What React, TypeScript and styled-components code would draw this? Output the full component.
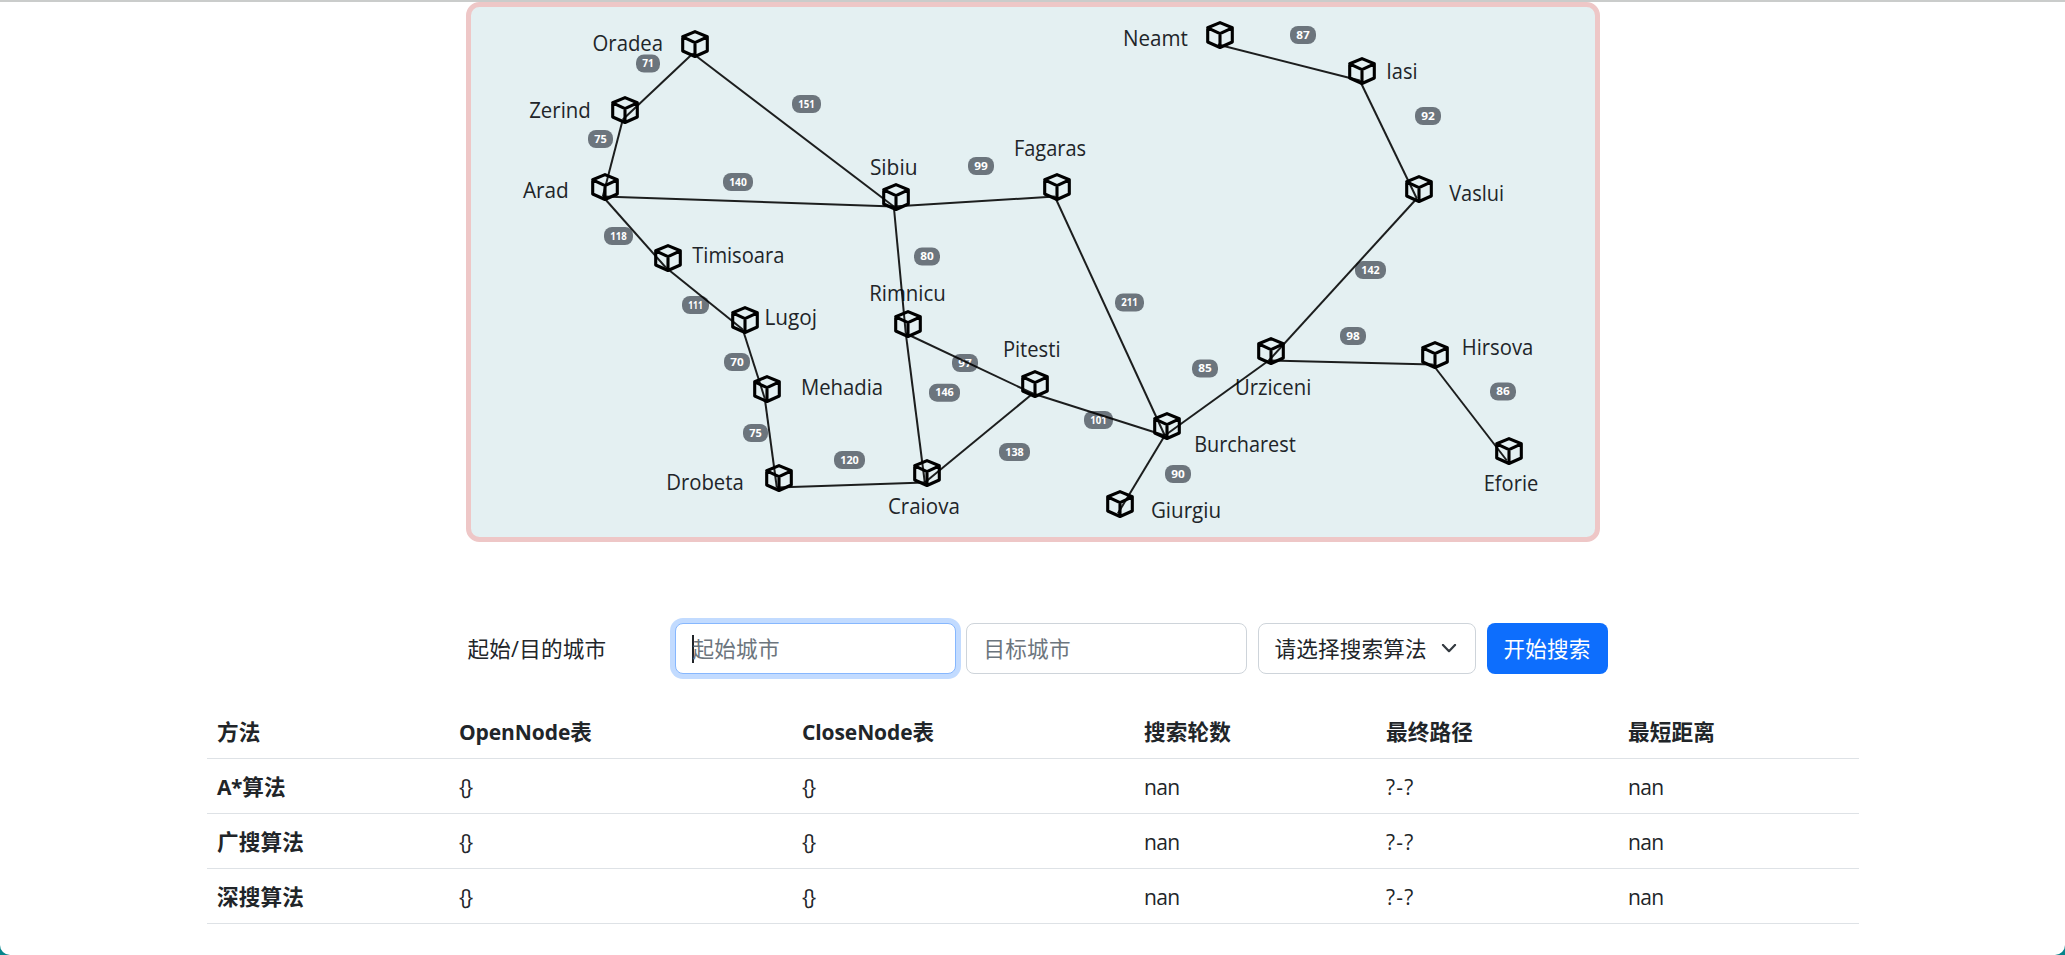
import React from "react";
import styled, { createGlobalStyle } from "styled-components";

const GlobalStyle = createGlobalStyle`
  *, *::before, *::after { box-sizing: border-box; }
  html, body { margin: 0; padding: 0; overflow: hidden; }
  body {
    background: #06858c;
    color: #212529;
    font-family: "Open Sans", "Noto Sans CJK SC", sans-serif;
    font-size: 21.6px;
    line-height: 32.4px;
  }
`;

type City = { x: number; y: number; name: string; from: number; to: number; base: number };

const cities: Record<string, City> = {
  oradea: { x: 695, y: 44, name: "Oradea", from: 593.3, to: 662.3, base: 51 },
  zerind: { x: 625, y: 110, name: "Zerind", from: 530, to: 590, base: 118 },
  arad: { x: 605, y: 187, name: "Arad", from: 523.7, to: 568, base: 198 },
  timisoara: { x: 668, y: 258, name: "Timisoara", from: 693, to: 783.7, base: 263 },
  lugoj: { x: 745, y: 320, name: "Lugoj", from: 765.3, to: 816.3, base: 325 },
  mehadia: { x: 767, y: 389, name: "Mehadia", from: 801.7, to: 882.3, base: 395 },
  drobeta: { x: 779, y: 478, name: "Drobeta", from: 667, to: 743, base: 490 },
  craiova: { x: 927, y: 473, name: "Craiova", from: 888.7, to: 959, base: 514 },
  rimnicu: { x: 908, y: 324, name: "Rimnicu", from: 870, to: 945, base: 301 },
  pitesti: { x: 1035, y: 384, name: "Pitesti", from: 1003.7, to: 1059.7, base: 357 },
  sibiu: { x: 896, y: 197, name: "Sibiu", from: 870.7, to: 916.7, base: 175 },
  fagaras: { x: 1057, y: 187, name: "Fagaras", from: 1014.7, to: 1085.3, base: 156 },
  burcharest: { x: 1167, y: 426, name: "Burcharest", from: 1195, to: 1295, base: 452 },
  giurgiu: { x: 1120, y: 504, name: "Giurgiu", from: 1151.7, to: 1220.3, base: 518 },
  urziceni: { x: 1271, y: 351, name: "Urziceni", from: 1235.7, to: 1310.5, base: 395 },
  hirsova: { x: 1435, y: 355, name: "Hirsova", from: 1462.5, to: 1532.5, base: 355 },
  eforie: { x: 1509, y: 451, name: "Eforie", from: 1484.5, to: 1537.5, base: 491 },
  vaslui: { x: 1419, y: 189, name: "Vaslui", from: 1450, to: 1503.3, base: 201 },
  iasi: { x: 1362, y: 71, name: "Iasi", from: 1387, to: 1416.7, base: 79 },
  neamt: { x: 1220, y: 35, name: "Neamt", from: 1123.7, to: 1187, base: 46 },
};

type Road = { a: string; b: string; km: number; x: number; y: number; w: number };

const roads: Road[] = [
  { a: "oradea", b: "zerind", km: 71, x: 636, y: 63.5, w: 24 },
  { a: "zerind", b: "arad", km: 75, x: 588, y: 139, w: 25 },
  { a: "arad", b: "timisoara", km: 118, x: 604, y: 236, w: 29 },
  { a: "oradea", b: "sibiu", km: 151, x: 792, y: 104, w: 29 },
  { a: "arad", b: "sibiu", km: 140, x: 723, y: 182, w: 30 },
  { a: "sibiu", b: "fagaras", km: 99, x: 968, y: 166, w: 26 },
  { a: "sibiu", b: "rimnicu", km: 80, x: 914, y: 256.5, w: 26 },
  { a: "neamt", b: "iasi", km: 87, x: 1290, y: 35, w: 26 },
  { a: "iasi", b: "vaslui", km: 92, x: 1415, y: 116, w: 26 },
  { a: "vaslui", b: "urziceni", km: 142, x: 1355, y: 270, w: 31 },
  { a: "timisoara", b: "lugoj", km: 111, x: 682, y: 305, w: 27 },
  { a: "lugoj", b: "mehadia", km: 70, x: 724, y: 362, w: 26 },
  { a: "mehadia", b: "drobeta", km: 75, x: 743, y: 433, w: 25 },
  { a: "drobeta", b: "craiova", km: 120, x: 834, y: 460, w: 31 },
  { a: "rimnicu", b: "pitesti", km: 97, x: 952, y: 363, w: 26 },
  { a: "rimnicu", b: "craiova", km: 146, x: 929, y: 392.7, w: 31 },
  { a: "craiova", b: "pitesti", km: 138, x: 999, y: 452, w: 31 },
  { a: "pitesti", b: "burcharest", km: 101, x: 1084, y: 420, w: 29 },
  { a: "fagaras", b: "burcharest", km: 211, x: 1115, y: 302.5, w: 29 },
  { a: "burcharest", b: "urziceni", km: 85, x: 1192, y: 368.5, w: 26 },
  { a: "burcharest", b: "giurgiu", km: 90, x: 1165, y: 474, w: 26 },
  { a: "urziceni", b: "hirsova", km: 98, x: 1340, y: 336, w: 26 },
  { a: "hirsova", b: "eforie", km: 86, x: 1490, y: 391.5, w: 26 },
];

const Page = styled.main`
  height: 955px;
  display: flex;
  flex-direction: column;
  align-items: center;
  background: #fff;
  border-top: 2px solid #cacccb;
  border-radius: 0 0 10px 10px;
`;

const MapPanel = styled.section`
  width: 1134px;
  height: 540px;
  margin-left: 1px;
  flex: none;
  border: 5px solid #eec7c7;
  border-radius: 13.5px;
  background: #e4f0f2;
`;

const MapDrawing = styled.svg`
  display: block;
  width: 1124px;
  height: 530px;
`;

const CityName = styled.text`
  font-size: 21.6px;
  fill: #212529;
`;

const BadgeShape = styled.rect`
  fill: #6c757d;
`;

const BadgeText = styled.text`
  font-size: 10.9px;
  font-weight: 700;
  fill: #fff;
  text-anchor: middle;
`;

const RoadLine = styled.line`
  stroke: #000;
  stroke-width: 2px;
  stroke-opacity: 0.88;
`;

const CubePath = styled.path`
  fill: none;
  stroke: #000;
  stroke-width: 3.1px;
  stroke-linejoin: round;
  stroke-linecap: round;
`;

const SearchBar = styled.form`
  width: 1142px;
  margin: 81px 0 0 10px;
  flex: none;
  display: flex;
  align-items: center;
`;

const Label = styled.label`
  width: 208px;
  padding: 2px 0 0 1px;
  letter-spacing: 0.2px;
`;

const CityField = styled.div<{ $focused?: boolean }>`
  width: 281px;
  height: 51px;
  margin-right: ${(p) => (p.$focused ? 10 : 11)}px;
  padding: 2px 16px 0 ${(p) => (p.$focused ? 16 : 17)}px;
  display: flex;
  align-items: center;
  border: 1px solid ${(p) => (p.$focused ? "#86b7fe" : "#ced4da")};
  border-radius: 8px;
  background: #fff;
  color: #6c757d;
  letter-spacing: 0.2px;
  box-shadow: ${(p) => (p.$focused ? "0 0 0 5px #c2dbff" : "none")};
`;

const Caret = styled.span`
  width: 2px;
  height: 28px;
  margin: -2px -1px 0 0;
  background: #212529;
`;

const AlgorithmSelect = styled.div`
  width: 218px;
  height: 51px;
  margin-right: 11px;
  padding: 2px 18px 0 16px;
  display: flex;
  align-items: center;
  justify-content: space-between;
  border: 1px solid #ced4da;
  border-radius: 8px;
  white-space: nowrap;
  letter-spacing: 0.15px;
`;

const SearchButton = styled.button`
  width: 121px;
  height: 51px;
  padding: 2px 0 0;
  border: 0;
  border-radius: 8px;
  background: #0d6efd;
  color: #fff;
  font: inherit;
  letter-spacing: 0.2px;
`;

const ResultTable = styled.table`
  width: 1652px;
  margin: 30px 0 0 1px;
  flex: none;
  table-layout: fixed;
  border-collapse: separate;
  border-spacing: 0;
  text-align: left;
`;

const Cell = styled.td`
  height: 55px;
  padding: 2px 10px 0;
  border-bottom: 1px solid #dee2e6;
  line-height: 32px;
`;

const HeadCell = styled(Cell).attrs({ as: "th" })`
  font-weight: 700;
  letter-spacing: 0.15px;
`;

const Col = styled.col<{ $w: number }>`
  width: ${(p) => p.$w}px;
`;

const Latin = styled.span<{ $spacing?: number }>`
  font-size: 21px;
  letter-spacing: ${(p) => p.$spacing ?? -0.6}px;
`;

const Cube = ({ x, y }: { x: number; y: number }) => (
  <CubePath
    transform={`translate(${x} ${y})`}
    d="M0 -12.4 L12.3 -7.2 V7 L0 12.5 L-12.3 7 V-7.2 Z M-12.3 -7.2 L0 -1.3 L12.3 -7.2 M0 -1.3 V12.5"
  />
);

const RomaniaMap = () => (
  <MapDrawing viewBox="471 7 1124 530">
    {Object.values(cities).map((c) => (
      <g key={c.name}>
        <CityName x={c.from - 0.8} y={c.base} textLength={c.to - c.from + 1.6} lengthAdjust="spacingAndGlyphs">
          {c.name}
        </CityName>
        <Cube x={c.x} y={c.y} />
      </g>
    ))}
    {roads.map((r) => (
      <g key={r.a + r.b}>
        <BadgeShape x={r.x} y={r.y - 9} width={r.w} height={18} rx={8} />
        <BadgeText x={r.x + r.w / 2} y={r.y + 3.7} textLength={r.w - 12.5} lengthAdjust="spacingAndGlyphs">
          {r.km}
        </BadgeText>
      </g>
    ))}
    {roads.map((r) => (
      <RoadLine
        key={r.a + r.b}
        x1={cities[r.a].x - 2.2}
        y1={cities[r.a].y + 9.5}
        x2={cities[r.b].x - 2.2}
        y2={cities[r.b].y + 9.5}
      />
    ))}
  </MapDrawing>
);

const Chevron = () => (
  <svg width="16" height="11" viewBox="0 0 16 11" fill="none" stroke="#343a40" strokeWidth="2.2" strokeLinecap="round" strokeLinejoin="round">
    <path d="M2 0.9 L8 7.2 L14 0.9" />
  </svg>
);

const methods = [
  { latin: "A*", text: "算法" },
  { latin: "", text: "广搜算法" },
  { latin: "", text: "深搜算法" },
];

export default function App() {
  return (
    <>
      <GlobalStyle />
      <Page>
        <MapPanel>
          <RomaniaMap />
        </MapPanel>
        <SearchBar>
          <Label>起始/目的城市</Label>
          <CityField $focused>
            <Caret />
            起始城市
          </CityField>
          <CityField>目标城市</CityField>
          <AlgorithmSelect>
            请选择搜索算法
            <Chevron />
          </AlgorithmSelect>
          <SearchButton type="button">开始搜索</SearchButton>
        </SearchBar>
        <ResultTable>
          <colgroup>
            {[242, 343, 342, 242, 242, 241].map((w, i) => (
              <Col key={i} $w={w} />
            ))}
          </colgroup>
          <thead>
            <tr>
              <HeadCell>方法</HeadCell>
              <HeadCell><Latin $spacing={-0.1}>OpenNode</Latin>表</HeadCell>
              <HeadCell><Latin $spacing={-0.1}>CloseNode</Latin>表</HeadCell>
              <HeadCell>搜索轮数</HeadCell>
              <HeadCell>最终路径</HeadCell>
              <HeadCell>最短距离</HeadCell>
            </tr>
          </thead>
          <tbody>
            {methods.map((m) => (
              <tr key={m.text}>
                <HeadCell>{m.latin && <Latin $spacing={-0.4}>{m.latin}</Latin>}{m.text}</HeadCell>
                <Cell><Latin $spacing={-1.6}>{"{}"}</Latin></Cell>
                <Cell><Latin $spacing={-1.6}>{"{}"}</Latin></Cell>
                <Cell><Latin>nan</Latin></Cell>
                <Cell><Latin $spacing={1.2}>?-?</Latin></Cell>
                <Cell><Latin>nan</Latin></Cell>
              </tr>
            ))}
          </tbody>
        </ResultTable>
      </Page>
    </>
  );
}
